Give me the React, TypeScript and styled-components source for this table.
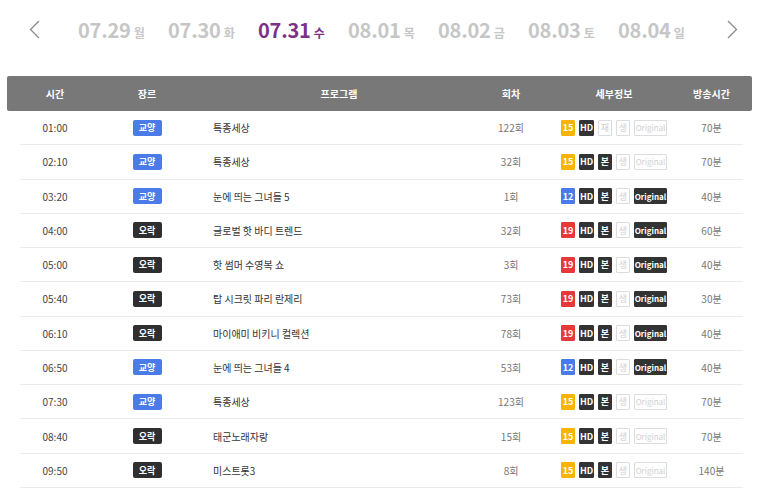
import React from "react";
import styled, { createGlobalStyle } from "styled-components";

const Global = createGlobalStyle`
  html, body { margin: 0; padding: 0; background: #fff; }
  body { font-family: "Noto Sans CJK KR", "Noto Sans", sans-serif; color: #333; }
`;

const Page = styled.div`
  padding: 0 7px;
`;

const DateNav = styled.nav`
  display: flex;
  align-items: center;
  height: 58px;
  padding-left: 21px;
`;

const ArrowButton = styled.button<{ $gapLeft?: number }>`
  display: flex;
  align-items: center;
  justify-content: center;
  width: 12px;
  height: 20px;
  padding: 0;
  border: 0;
  background: none;
  margin-left: ${(p) => p.$gapLeft ?? 0}px;
`;

const DateList = styled.ul`
  display: flex;
  gap: 25px;
  list-style: none;
  margin: 0 0 0 38px;
  padding: 0;
`;

const DateItem = styled.li<{ $active?: boolean }>`
  width: 65px;
  white-space: nowrap;
  color: ${(p) => (p.$active ? "#7a3287" : "#c6c6c6")};
  display: flex;
  align-items: baseline;
`;

const DateNum = styled.span`
  font-size: 20px;
  font-weight: 700;
  letter-spacing: -0.2px;
`;

const DateDay = styled.span`
  font-size: 12px;
  font-weight: 700;
  margin-left: 3px;
`;

const Table = styled.div`
  margin-top: 18px;
`;

const cols = "70px 114px 270px 74px 132px 63px";

const HeaderRow = styled.div`
  display: grid;
  grid-template-columns: ${cols};
  height: 35px;
  align-items: center;
  background: #787878;
  border-radius: 2px;
  padding: 0 9px 0 13px;
  color: #fff;
  font-size: 10px;
  font-weight: 700;
  text-align: center;
`;

const Body = styled.div`
  margin: 0 9px 0 13px;
`;

const Row = styled.div`
  display: grid;
  grid-template-columns: ${cols};
  height: 34.27px;
  box-sizing: border-box;
  align-items: center;
  border-bottom: 1px solid #ebebeb;
  font-size: 10px;
`;

const Cell = styled.div<{ $align?: "left" | "center"; $color?: string }>`
  text-align: ${(p) => p.$align ?? "center"};
  padding-left: ${(p) => (p.$align === "left" ? "9px" : "0")};
  color: ${(p) => p.$color ?? "#444"};
  display: flex;
  justify-content: ${(p) => (p.$align === "left" ? "flex-start" : "center")};
  align-items: center;
`;

const GenreBadge = styled.span<{ $kind: "edu" | "ent" }>`
  display: inline-flex;
  align-items: center;
  justify-content: center;
  width: 29px;
  height: 16px;
  border-radius: 2px;
  background: ${(p) => (p.$kind === "edu" ? "#4a7be9" : "#2f2f2f")};
  color: #fff;
  font-size: 9px;
  font-weight: 700;
`;

const Badges = styled.div`
  display: flex;
  gap: 4px;
  align-items: center;
`;

const Badge = styled.span<{ $bg?: string; $off?: boolean; $w: number }>`
  display: inline-flex;
  align-items: center;
  justify-content: center;
  box-sizing: border-box;
  width: ${(p) => p.$w}px;
  height: 16px;
  border-radius: 1px;
  font-size: ${(p) => (p.$w > 20 ? 8 : 9)}px;
  background: ${(p) => (p.$off ? "#fff" : p.$bg ?? "#333")};
  color: ${(p) => (p.$off ? "#d0d0d0" : "#fff")};
  border: 1px solid ${(p) => (p.$off ? "#dcdcdc" : p.$bg ?? "#333")};
  font-weight: ${(p) => (p.$off ? 400 : 700)};
`;

const Chevron = ({ dir }: { dir: "left" | "right" }) => (
  <svg width="11" height="19" viewBox="0 0 11 19">
    <path
      d={dir === "left" ? "M10 1 L1.5 9.5 L10 18" : "M1 1 L9.5 9.5 L1 18"}
      fill="none"
      stroke="#8a8a8a"
      strokeWidth="1.3"
    />
  </svg>
);

const dates = [
  ["07.29", "월"],
  ["07.30", "화"],
  ["07.31", "수"],
  ["08.01", "목"],
  ["08.02", "금"],
  ["08.03", "토"],
  ["08.04", "일"],
];

type Prog = {
  time: string;
  genre: "edu" | "ent";
  title: string;
  ep: string;
  age: "12" | "15" | "19";
  third: "재" | "본";
  original: boolean;
  dur: string;
};

const rows: Prog[] = [
  { time: "01:00", genre: "edu", title: "특종세상", ep: "122회", age: "15", third: "재", original: false, dur: "70분" },
  { time: "02:10", genre: "edu", title: "특종세상", ep: "32회", age: "15", third: "본", original: false, dur: "70분" },
  { time: "03:20", genre: "edu", title: "눈에 띄는 그녀들 5", ep: "1회", age: "12", third: "본", original: true, dur: "40분" },
  { time: "04:00", genre: "ent", title: "글로벌 핫 바디 트렌드", ep: "32회", age: "19", third: "본", original: true, dur: "60분" },
  { time: "05:00", genre: "ent", title: "핫 썸머 수영복 쇼", ep: "3회", age: "19", third: "본", original: true, dur: "40분" },
  { time: "05:40", genre: "ent", title: "탑 시크릿 파리 란제리", ep: "73회", age: "19", third: "본", original: true, dur: "30분" },
  { time: "06:10", genre: "ent", title: "마이애미 비키니 컬렉션", ep: "78회", age: "19", third: "본", original: true, dur: "40분" },
  { time: "06:50", genre: "edu", title: "눈에 띄는 그녀들 4", ep: "53회", age: "12", third: "본", original: true, dur: "40분" },
  { time: "07:30", genre: "edu", title: "특종세상", ep: "123회", age: "15", third: "본", original: false, dur: "70분" },
  { time: "08:40", genre: "ent", title: "태군노래자랑", ep: "15회", age: "15", third: "본", original: false, dur: "70분" },
  { time: "09:50", genre: "ent", title: "미스트롯3", ep: "8회", age: "15", third: "본", original: false, dur: "140분" },
];

const ageColor = { "12": "#4a7be9", "15": "#f7b500", "19": "#e5393b" };

export default function App() {
  return (
    <Page>
      <Global />
      <DateNav>
        <ArrowButton aria-label="이전">
          <Chevron dir="left" />
        </ArrowButton>
        <DateList>
          {dates.map(([d, w]) => (
            <DateItem key={d} $active={d === "07.31"}>
              <DateNum>{d}</DateNum>
              <DateDay>{w}</DateDay>
            </DateItem>
          ))}
        </DateList>
        <ArrowButton aria-label="다음" $gapLeft={43}>
          <Chevron dir="right" />
        </ArrowButton>
      </DateNav>
      <Table>
        <HeaderRow>
          <div>시간</div>
          <div>장르</div>
          <div>프로그램</div>
          <div>회차</div>
          <div>세부정보</div>
          <div>방송시간</div>
        </HeaderRow>
        <Body>
          {rows.map((r, i) => (
            <Row key={i}>
              <Cell>{r.time}</Cell>
              <Cell>
                <GenreBadge $kind={r.genre}>{r.genre === "edu" ? "교양" : "오락"}</GenreBadge>
              </Cell>
              <Cell $align="left" $color="#333">{r.title}</Cell>
              <Cell $color="#777">{r.ep}</Cell>
              <Cell>
                <Badges>
                  <Badge $w={14} $bg={ageColor[r.age]}>{r.age}</Badge>
                  <Badge $w={15}>HD</Badge>
                  <Badge $w={14} $off={r.third === "재"}>{r.third}</Badge>
                  <Badge $w={14} $off>생</Badge>
                  <Badge $w={33} $off={!r.original}>Original</Badge>
                </Badges>
              </Cell>
              <Cell $color="#777">{r.dur}</Cell>
            </Row>
          ))}
        </Body>
      </Table>
    </Page>
  );
}
